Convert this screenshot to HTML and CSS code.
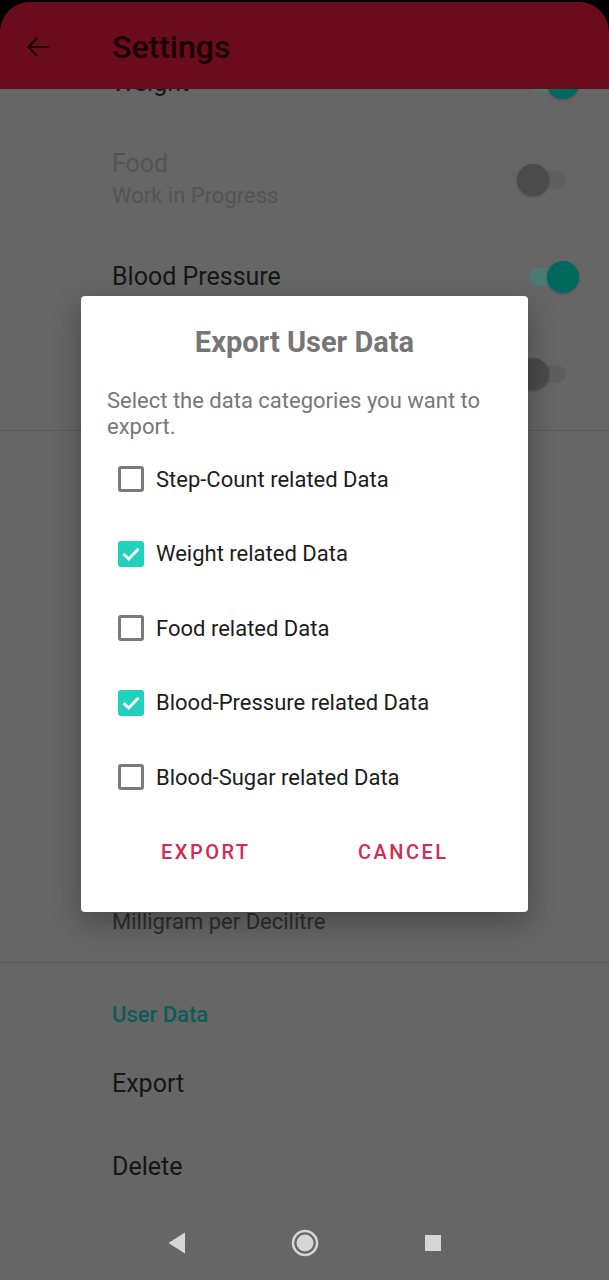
FILE: index.html
```html
<!DOCTYPE html>
<html>
<head>
<meta charset="utf-8">
<link rel="stylesheet" href="styles.css">
</head>
<body>
<div class="screen">
  <div class="list">
    <div class="row">
      <div class="texts"><div class="title">Weight</div></div>
      <div class="switch on"><span class="track"></span><span class="thumb"></span></div>
    </div>
    <div class="row">
      <div class="texts"><div class="title disabled">Food</div><div class="summary disabled">Work in Progress</div></div>
      <div class="switch"><span class="track"></span><span class="thumb"></span></div>
    </div>
    <div class="row">
      <div class="texts"><div class="title">Blood Pressure</div></div>
      <div class="switch on"><span class="track"></span><span class="thumb"></span></div>
    </div>
    <div class="row">
      <div class="texts"><div class="title">Blood Sugar</div></div>
      <div class="switch"><span class="track"></span><span class="thumb"></span></div>
    </div>
    <div class="divider"></div>
    <div class="category"></div>
    <div class="row"></div>
    <div class="row tall"></div>
    <div class="row"></div>
    <div class="row">
      <div class="texts"><div class="title blank"></div><div class="summary">Milligram per Decilitre</div></div>
    </div>
    <div class="divider"></div>
    <div class="category">User Data</div>
    <div class="row single"><div class="texts"><div class="title">Export</div></div></div>
    <div class="row single"><div class="texts"><div class="title">Delete</div></div></div>
  </div>

  <div class="navbar">
    <span class="nav-slot"><svg width="20" height="24" viewBox="0 0 20 24"><path d="M18 1.5 L18 22.5 L1.5 12 Z" fill="#d6d6d6"/></svg></span>
    <span class="nav-slot"><svg width="28" height="28" viewBox="0 0 28 28"><circle cx="14" cy="14" r="12" fill="none" stroke="#d6d6d6" stroke-width="2.5"/><circle cx="14" cy="14" r="8.5" fill="#d6d6d6"/></svg></span>
    <span class="nav-slot"><svg width="18" height="18" viewBox="0 0 18 18"><rect x="1" y="1" width="16" height="16" fill="#d6d6d6"/></svg></span>
  </div>

  <div class="topbar">
    <div class="appbar">
      <svg class="back" width="32" height="32" viewBox="0 0 24 24"><path d="M20 11.2H6.7l5.3-5.3-1.13-1.13L3.65 12l7.22 7.23 1.13-1.13-5.3-5.3H20z" fill="#1a0306"/></svg>
      <div class="appbar-title">Settings</div>
    </div>
  </div>

  <div class="dialog">
    <div class="dialog-title">Export User Data</div>
    <div class="dialog-message">Select the data categories you want to export.</div>
    <div class="options">
      <div class="option"><span class="box"></span><span class="label">Step-Count related Data</span></div>
      <div class="option"><span class="box checked"><svg width="20" height="20" viewBox="0 0 20 20"><path d="M2.5 10 L7.8 15 L17.5 4.8" fill="none" stroke="#fff" stroke-width="3"/></svg></span><span class="label">Weight related Data</span></div>
      <div class="option"><span class="box"></span><span class="label">Food related Data</span></div>
      <div class="option"><span class="box checked"><svg width="20" height="20" viewBox="0 0 20 20"><path d="M2.5 10 L7.8 15 L17.5 4.8" fill="none" stroke="#fff" stroke-width="3"/></svg></span><span class="label">Blood-Pressure related Data</span></div>
      <div class="option"><span class="box"></span><span class="label">Blood-Sugar related Data</span></div>
    </div>
    <div class="buttons">
      <span class="btn">EXPORT</span>
      <span class="btn">CANCEL</span>
    </div>
  </div>
</div>
</body>
</html>
```
FILE: styles.css
```css
* { box-sizing: border-box; }
html, body { margin: 0; padding: 0; }
body {
  width: 609px;
  height: 1280px;
  background: #666666;
  font-family: Roboto, "Noto Sans", sans-serif;
  overflow: hidden;
}
.screen {
  position: relative;
  width: 609px;
  height: 1280px;
  background: #666666;
  overflow: hidden;
}
.topbar {
  position: absolute;
  top: 0; left: 0; right: 0;
  height: 89px;
  background: #000;
  padding-top: 2px;
}
.appbar {
  height: 87px;
  background: #6b0c1d;
  border-radius: 30px 30px 0 0;
  display: flex;
  align-items: center;
  padding-left: 22px;
}
.back { margin-right: 58px; margin-top: 2px; }
.appbar-title {
  font-size: 32px;
  font-weight: 500;
  color: #1a0306;
  margin-top: 2px;
}
.list { padding-top: 34px; }
.row {
  height: 97px;
  display: flex;
  align-items: center;
  padding-left: 112px;
  padding-right: 30px;
}
.row.tall { height: 153px; }
.row.single { height: 83px; }
.texts { flex: 1; }
.title { font-size: 25px; color: #161616; line-height: 32px; }
.title.blank { height: 32px; }
.summary { font-size: 22px; color: #2e2e2e; line-height: 32px; }
.title.disabled, .summary.disabled { color: #545454; }
.switch {
  position: relative;
  width: 62px;
  height: 34px;
}
.switch .track {
  position: absolute;
  left: 12px; top: 8px;
  width: 37px; height: 18px;
  border-radius: 9px;
  background: #5f5f5f;
}
.switch .thumb {
  position: absolute;
  left: 0; top: 1px;
  width: 32px; height: 32px;
  border-radius: 50%;
  background: #4b4b4b;
  box-shadow: 0 1px 3px rgba(0,0,0,0.25);
}
.switch.on .track { background: #4a7a73; }
.switch.on .thumb { left: 30px; background: #00695d; }
.divider { height: 1px; background: #5b5b5b; margin-top: 8px; }
.category {
  height: 79px;
  padding-left: 112px;
  padding-top: 39px;
  font-size: 22px;
  font-weight: 500;
  color: #0b5e55;
}
.navbar {
  position: absolute;
  left: 0; right: 0; bottom: 0;
  height: 74px;
  display: flex;
  justify-content: center;
  align-items: center;
  gap: 88px;
}
.nav-slot {
  width: 40px;
  height: 40px;
  display: flex;
  align-items: center;
  justify-content: center;
}
.dialog {
  position: absolute;
  left: 81px;
  top: 296px;
  width: 447px;
  height: 616px;
  background: #fff;
  border-radius: 4px;
  box-shadow: 0 10px 30px rgba(0,0,0,0.3);
  padding: 0 26px;
}
.dialog-title {
  text-align: center;
  font-size: 29px;
  font-weight: 700;
  color: #767676;
  padding-top: 28px;
  line-height: 36px;
}
.dialog-message {
  font-size: 22px;
  color: #777;
  line-height: 26px;
  margin-top: 28px;
}
.options { margin-top: 2px; }
.option {
  height: 74.5px;
  display: flex;
  align-items: center;
  padding-left: 11px;
}
.box {
  width: 26px; height: 26px;
  border: 3px solid #7a7a7a;
  border-radius: 3px;
  margin-right: 12px;
  display: flex;
  align-items: center;
  justify-content: center;
  flex: none;
}
.box.checked { background: #20d2be; border-color: #20d2be; }
.label { font-size: 22px; color: #1c1c1c; }
.buttons {
  display: flex;
  margin-top: 25px;
}
.btn {
  font-size: 20px;
  font-weight: 500;
  color: #d52a52;
  letter-spacing: 2.5px;
  width: 198px;
  text-align: center;
}
```
